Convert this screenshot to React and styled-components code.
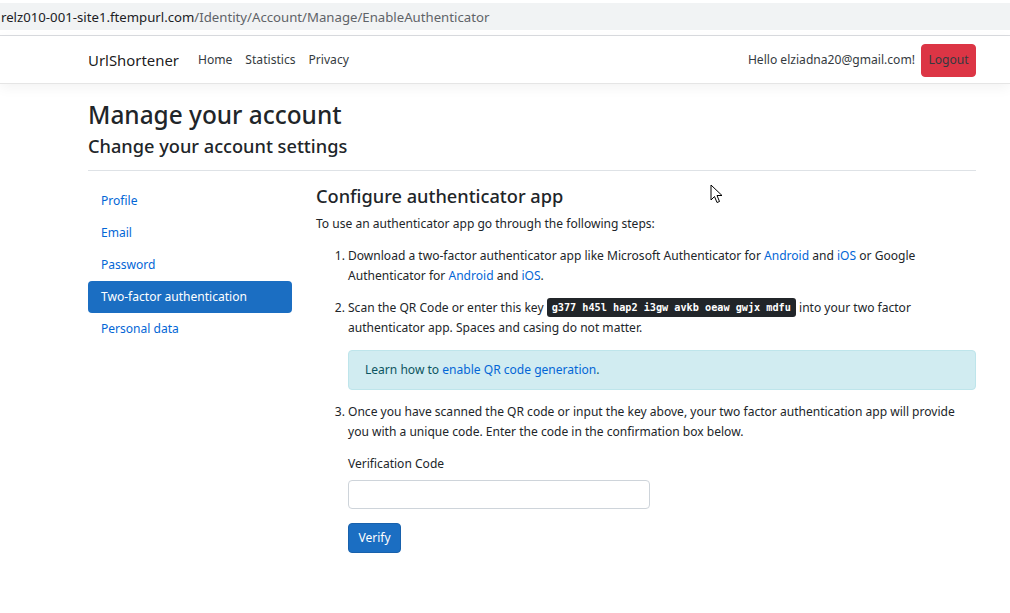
import React from "react";
import styled, { createGlobalStyle } from "styled-components";

const Global = createGlobalStyle`
  html, body { margin: 0; padding: 0; background: #fff; }
  body {
    font-family: "Noto Sans", "Open Sans", "Liberation Sans", sans-serif;
    font-size: 12.05px;
    line-height: 20px;
    color: #212529;
  }
  * { box-sizing: border-box; }
`;

const Chrome = styled.div`
  height: 36px;
  padding-top: 3px;
  border-bottom: 1px solid #dadce0;
  background: #fff;
`;

const UrlField = styled.div`
  height: 27px;
  background: #f1f3f4;
  display: flex;
  align-items: center;
  padding-left: 1px;
  font-size: 13.2px;
  white-space: nowrap;
  color: #5f6368;
`;

const Host = styled.span`
  color: #202124;
`;

const Navbar = styled.header`
  height: 48px;
  border-bottom: 1px solid #e5e5e5;
  box-shadow: 0 4px 12px rgba(0, 0, 0, 0.05);
  background: #fff;
`;

const Container = styled.div`
  margin-left: 88px;
  width: 888px;
`;

const NavInner = styled(Container)`
  height: 100%;
  display: flex;
  align-items: center;
  padding-top: 1px;
`;

const Brand = styled.span`
  font-size: 14.9px;
  color: rgba(0, 0, 0, 0.9);
  margin-right: 19px;
`;

const NavLink = styled.span`
  font-size: 12.1px;
  color: #343a40;
  margin-right: 13px;
`;

const Spacer = styled.div`
  flex: 1;
`;

const Hello = styled.span`
  font-size: 12.1px;
  color: #343a40;
  margin-right: 6px;
`;

const LogoutBtn = styled.button`
  height: 33px;
  width: 55px;
  background: #dc3545;
  border: 1px solid #dc3545;
  border-radius: 4px;
  color: #343a40;
  font: inherit;
  font-size: 12.1px;
  padding: 0;
`;

const Main = styled(Container)`
  padding-top: 16px;
`;

const H1 = styled.h1`
  margin: 0;
  font-size: 24.4px;
  font-weight: 500;
  line-height: 1.2;
`;

const H2 = styled.h2`
  margin: 7px 0 0;
  font-size: 18.2px;
  font-weight: 500;
  line-height: 1.2;
`;

const Hr = styled.hr`
  margin: 12px 0 14px;
  border: 0;
  border-top: 1px solid #dee2e6;
`;

const Row = styled.div`
  display: flex;
  gap: 24px;
`;

const Sidebar = styled.nav`
  width: 204px;
  flex: none;
  display: flex;
  flex-direction: column;
`;

const Pill = styled.a`
  display: block;
  height: 32px;
  line-height: 32px;
  padding: 0 13px;
  border-radius: 4px;
  text-decoration: none;
  color: ${(p) => (p.$active ? "#fff" : "#0366d6")};
  background: ${(p) => (p.$active ? "#1b6ec2" : "transparent")};
`;

const Content = styled.div`
  flex: 1;
  position: relative;
`;

const H3 = styled.h3`
  margin: 1px 0 6px;
  font-size: 18.2px;
  font-weight: 500;
  line-height: 1.2;
`;

const P = styled.p`
  margin: 0 0 12px;
`;

const Ol = styled.ol`
  margin: 0;
  padding-left: 32px;
  list-style: decimal;
`;

const Li = styled.li``;

const A = styled.a`
  color: #0366d6;
  text-decoration: none;
`;

const Kbd = styled.kbd`
  display: inline-block;
  font-family: "DejaVu Sans Mono", "Liberation Mono", monospace;
  font-size: 10.2px;
  font-weight: 700;
  line-height: 13px;
  padding: 3px 5px;
  background: #212529;
  color: #fff;
  border-radius: 3px;
  vertical-align: 1px;
`;

const Alert = styled.div`
  height: 40px;
  display: flex;
  align-items: center;
  padding: 0 16px;
  margin: 0 0 12px;
  background: #d1ecf1;
  border: 1px solid #bee5eb;
  border-radius: 4px;
  color: #0c5460;
`;

const AlertLink = styled.a`
  color: #0366d6;
  text-decoration: none;
`;

const Label = styled.label`
  display: block;
  margin-bottom: 6px;
`;

const Input = styled.input`
  display: block;
  width: 302px;
  height: 29px;
  border: 1px solid #ced4da;
  border-radius: 4px;
  background: #fff;
  font: inherit;
  padding: 0 10px;
  margin-bottom: 14px;
`;

const PrimaryBtn = styled.button`
  width: 53px;
  height: 30px;
  background: #1b6ec2;
  border: 1px solid #1861ac;
  border-radius: 4px;
  color: #fff;
  font: inherit;
  padding: 0;
`;

const Cursor = styled.svg`
  position: absolute;
  left: 394px;
  top: -1px;
`;

export default function App() {
  return (
    <>
      <Global />
      <Chrome>
        <UrlField>
          <Host>relz010-001-site1.ftempurl.com</Host>/Identity/Account/Manage/EnableAuthenticator
        </UrlField>
      </Chrome>
      <Navbar>
        <NavInner>
          <Brand>UrlShortener</Brand>
          <NavLink>Home</NavLink>
          <NavLink>Statistics</NavLink>
          <NavLink>Privacy</NavLink>
          <Spacer />
          <Hello>Hello elziadna20@gmail.com!</Hello>
          <LogoutBtn>Logout</LogoutBtn>
        </NavInner>
      </Navbar>
      <Main>
        <H1>Manage your account</H1>
        <H2>Change your account settings</H2>
        <Hr />
        <Row>
          <Sidebar>
            <Pill>Profile</Pill>
            <Pill>Email</Pill>
            <Pill>Password</Pill>
            <Pill $active>Two-factor authentication</Pill>
            <Pill>Personal data</Pill>
          </Sidebar>
          <Content>
            <Cursor width="14" height="20" viewBox="0 0 14 20">
              <path
                d="M1 1 L1 16 L4.5 12.5 L7 18.5 L9.5 17.5 L7 11.5 L12 11.5 Z"
                fill="#fff"
                stroke="#000"
                strokeWidth="1"
                strokeLinejoin="round"
              />
            </Cursor>
            <H3>Configure authenticator app</H3>
            <P>To use an authenticator app go through the following steps:</P>
            <Ol>
              <Li>
                <P>
                  Download a two-factor authenticator app like Microsoft Authenticator for{" "}
                  <A>Android</A> and <A>iOS</A> or Google Authenticator for <A>Android</A> and{" "}
                  <A>iOS</A>.
                </P>
              </Li>
              <Li>
                <P>
                  Scan the QR Code or enter this key <Kbd>g377 h45l hap2 i3gw avkb oeaw gwjx mdfu</Kbd>{" "}
                  into your two factor authenticator app. Spaces and casing do not matter.
                </P>
                <Alert>
                  <span>
                    Learn how to&nbsp;<AlertLink>enable QR code generation</AlertLink>.
                  </span>
                </Alert>
              </Li>
              <Li>
                <P>
                  Once you have scanned the QR code or input the key above, your two factor
                  authentication app will provide you with a unique code. Enter the code in the
                  confirmation box below.
                </P>
                <Label>Verification Code</Label>
                <Input />
                <PrimaryBtn>Verify</PrimaryBtn>
              </Li>
            </Ol>
          </Content>
        </Row>
      </Main>
    </>
  );
}
